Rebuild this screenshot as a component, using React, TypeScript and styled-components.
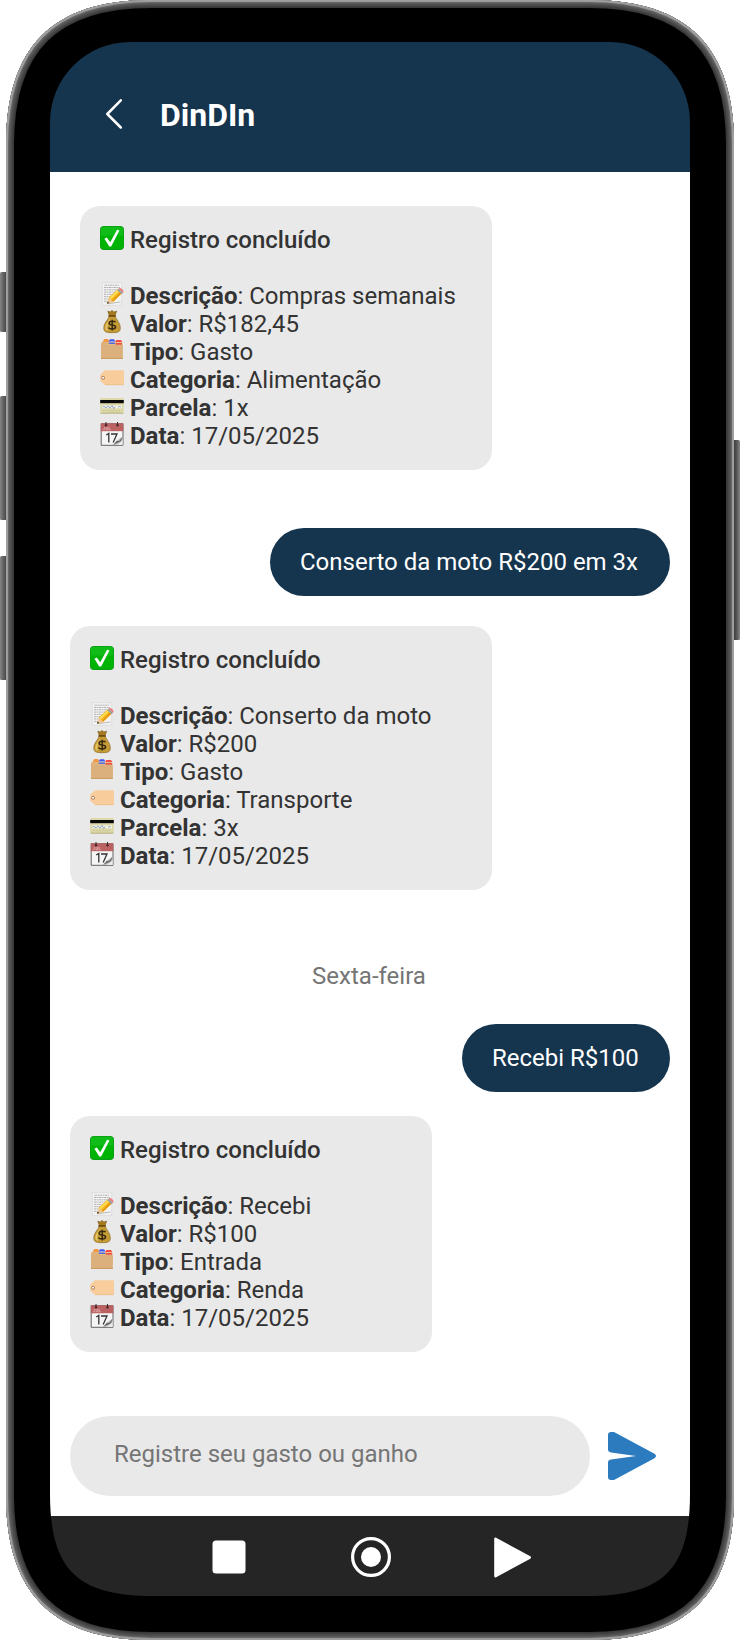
import React from "react";
import styled, { createGlobalStyle } from "styled-components";

const GlobalStyle = createGlobalStyle`
  * { box-sizing: border-box; }
  body {
    margin: 0;
    background: #fff;
    font-family: Roboto, "Liberation Sans", sans-serif;
  }
`;

const Device = styled.div`
  position: relative;
  width: 740px;
  height: 1640px;
  padding: 42px 50px 44px;
  overflow: hidden;
`;

const Shell = styled.svg`
  position: absolute;
  inset: 0;
  display: block;
`;

const Screen = styled.main`
  position: relative;
  display: flex;
  flex-direction: column;
  width: 640px;
  height: 1554px;
  clip-path: path("M80 0H560A80 80 0 0 1 640 80V1452C640 1527 613 1554 538 1554H102C27 1554 0 1527 0 1452V80A80 80 0 0 1 80 0Z");
`;

const Header = styled.header`
  display: flex;
  align-items: center;
  height: 130px;
  padding: 14px 56px 0;
  background: #15344d;
  color: #fff;
`;

const BackButton = styled.button`
  display: flex;
  width: 16px;
  height: 30px;
  margin: 0 38px 0 0;
  padding: 0;
  border: 0;
  background: none;
  color: inherit;
`;

const Title = styled.h1`
  margin: 0;
  padding-top: 2px;
  font-size: 32px;
  line-height: 38px;
  font-weight: 700;
`;

const Chat = styled.section`
  flex: 1;
  display: flex;
  flex-direction: column;
  padding: 34px 20px 0;
  background: #fff;
`;

const Receipt = styled.article<{ $width: number; $indent?: number; $gap: number }>`
  width: ${(p) => p.$width}px;
  margin: 0 0 ${(p) => p.$gap}px ${(p) => p.$indent ?? 0}px;
  padding: 20px;
  border-radius: 20px;
  background: #e9e9e9;
  color: #333;
  font-size: 24px;
  line-height: 28px;
`;

const ReceiptTitle = styled.h2`
  display: flex;
  align-items: center;
  gap: 6px;
  margin: 0 0 28px;
  font-size: inherit;
  line-height: inherit;
  font-weight: 500;
`;

const Line = styled.p`
  display: flex;
  align-items: center;
  gap: 6px;
  height: 28px;
  margin: 0;
  white-space: nowrap;

  b { font-weight: 700; }
`;

const Emoji = styled.svg`
  flex: none;
  display: block;
  width: 24px;
  height: 24px;
  margin-top: -4px;
`;

const Sent = styled.p<{ $width: number; $gap: number }>`
  align-self: flex-end;
  width: ${(p) => p.$width}px;
  margin: 0 0 ${(p) => p.$gap}px;
  padding: 20px 0 20px 30px;
  border-radius: 34px;
  background: #15344d;
  color: #fff;
  font-size: 24px;
  line-height: 28px;
  white-space: nowrap;
`;

const DayLabel = styled.div`
  margin: 0 0 34px;
  padding-right: 2px;
  color: #757575;
  font-size: 24px;
  line-height: 28px;
  text-align: center;
`;

const Composer = styled.form`
  display: flex;
  align-items: center;
  gap: 18px;
  padding: 0 20px 20px;
  background: #fff;
`;

const Entry = styled.div`
  width: 520px;
  height: 80px;
  padding: 24px 44px;
  border-radius: 40px;
  background: #e9e9e9;
  color: #757575;
  font-size: 24px;
  line-height: 28px;
`;

const SendButton = styled.button`
  display: flex;
  padding: 0;
  border: 0;
  background: none;
`;

const NavBar = styled.nav`
  display: flex;
  align-items: center;
  height: 80px;
  padding: 2px 0 0 162px;
  background: #252525;
`;

const NavIcon = styled.svg<{ $after?: number }>`
  display: block;
  margin-right: ${(p) => p.$after ?? 0}px;
`;

type EmojiName = "check" | "memo" | "money" | "folder" | "tag" | "card" | "calendar";

const drawings: Record<EmojiName, React.ReactNode> = {
  check: (
    <>
      <rect x="0" y="0" width="24" height="24" rx="4" fill="#0a9c12" />
      <rect x=".8" y=".8" width="22.4" height="21.8" rx="3.2" fill="#10bc18" />
      <path d="M.8 9.5H23.2V19.6Q23.2 22.8 20 22.8H4Q.8 22.8 .8 19.6Z" fill="#00b406" />
      <path d="M4.4 12.8L6.8 11.6L10.2 16.2L17.1 3.7L19.4 4.5L11.2 20.4H9.3Z" fill="#fff" />
    </>
  ),
  memo: (
    <>
      <path d="M2.3 .7H21.7V23.3H2.3Z" fill="#f3f3f3" stroke="#d4d4d4" strokeWidth=".6" />
      <path d="M4.5 3.2H19M4 5.5H20M4 7.8H17M4 10.1H15M4 12.4H13M4 14.7H10M4 17H8M4 19.3H7" stroke="#aaa" strokeWidth=".9" strokeDasharray="2.5 .6 1.4 .5" />
      <path d="M8 21.7L20.5 20" stroke="#bbb" />
      <path d="M7 21.7L9 15.5L18 7L22.3 11.2L13.2 20Z" fill="#f7b719" />
      <path d="M10.2 16.7L19 8.2" stroke="#ffe05d" strokeWidth="1.7" />
      <path d="M12.5 19.1L21.3 10.4" stroke="#dc8b12" strokeWidth="1.1" />
      <path d="M7 21.7L9 15.5L13.2 20Z" fill="#efc79a" />
      <path d="M7 21.7L7.7 19.3L9.1 21Z" fill="#292929" />
      <path d="M17 8L18.7 6.5L23 10.7L21.4 12.2Z" fill="#9da1a2" />
      <path d="M18.7 6.5Q20 5.3 22 7.1Q24.4 9.2 23 10.7Z" fill="#ee7777" />
    </>
  ),
  money: (
    <>
      <path d="M7.8 1.2L10.4 2L12 .3L13.7 2L16.6 1.2L15 5.8H9.4Z" fill="#a77a20" stroke="#795512" strokeWidth=".6" />
      <path d="M9 6H15.3C16 10 20.3 12 20.3 18.2C20.3 21.8 18.1 22.7 12.1 22.7S3.8 21.8 3.8 18.2C3.8 12 8.5 10 9 6Z" fill="#c59b35" stroke="#815e1a" strokeWidth=".6" />
      <path d="M9.5 8C9.3 11.5 5.3 13.5 5.3 18C5.3 20.5 7 20.8 8 20.8C5.5 15 10.5 12 9.5 8Z" fill="#e6c769" />
      <path d="M8.5 5.9H15.7" stroke="#6d4811" strokeWidth="1.6" />
      <path d="M15.5 12.2C14.7 10.9 9.1 10.7 9.1 13.2C9.1 16 15.6 14 15.6 17C15.6 19.5 9.3 19.3 8.6 17.4M12.2 9.7V20.5" fill="none" stroke="#382b11" strokeWidth="1.5" />
    </>
  ),
  folder: (
    <>
      <path d="M2.5 4L4.2 1H8L9.5 4Z" fill="#f39745" />
      <path d="M8.5 3.5L10 1.3H14L15.5 3.5Z" fill="#4258ee" />
      <path d="M15 4L16.4 2.1H21L22.2 4Z" fill="#f54c43" />
      <path d="M3.5 4H22.4V7H3.5Z" fill="#e5c194" />
      <path d="M8.5 4.5H15V6H8.5Z" fill="#536de0" />
      <path d="M15.5 5H22V7H15.5Z" fill="#f24c43" />
      <path d="M1 5L3.2 3.6L8 4.5L9.5 6.7H22.7V21H1Z" fill="#dfb27a" />
      <path d="M1 6.8H22.7V21H1Z" fill="#dbb07c" />
      <path d="M1 20.4H22.7" stroke="#c89657" strokeWidth=".8" />
    </>
  ),
  tag: (
    <>
      <path d="M5 4.3H23Q24 4.3 24 5.3V18Q24 19 23 19H5L.8 15.3Q.2 14.8.2 14V9.4Q.2 8.7.8 8Z" fill="#f8cd9b" />
      <path d="M5 18.7H23.5" stroke="#e8b77f" strokeWidth=".7" />
      <circle cx="3.1" cy="11.8" r="1.5" fill="#fff" stroke="#a77555" strokeWidth=".9" />
    </>
  ),
  card: (
    <>
      <rect x=".2" y="4" width="23.6" height="15.7" rx="1.2" fill="#ddd8a8" />
      <path d="M.2 6H23.8V9.2H.2Z" fill="#080808" />
      <path d="M2 11.3H22V14.3H2Z" fill="#f4f3e7" />
      <path d="M2.5 13.2Q4 11.3 5 13.1T7 12.8T9 13.1T11 12.7T13 13.1T15 12.7M18 13.1Q19.7 11.8 21 13.1" fill="none" stroke="#6482b4" strokeWidth=".7" />
      <path d="M3 16.3H20M7 18H20" stroke="#c5c090" strokeWidth=".6" strokeDasharray="2 1" />
      <path d="M.7 19.2H23.2" stroke="#aaa57b" strokeWidth=".7" />
    </>
  ),
  calendar: (
    <>
      <path d="M1.2 1.7H23V23.3H1.2Z" fill="#f5f5f5" stroke="#555" strokeWidth=".9" />
      <path d="M.8 1.3H23.3V9.2H.8Z" fill="#bd6263" />
      <path d="M2.9 7.7H4.3V4.8M6.1 4.8V7.7H7.8V4.8M9.1 4.8V7.7H10.8" fill="none" stroke="#e5bdbd" strokeWidth=".7" />
      <path d="M6 0V4M17.5 0V4" stroke="#333" strokeWidth="1" />
      <circle cx="6" cy="3.3" r="1.2" fill="#4a2525" />
      <circle cx="17.5" cy="3.3" r="1.2" fill="#4a2525" />
      <path d="M6.2 13L8.8 11.5V20.5M11 12H17L13.2 20.5" fill="none" stroke="#333" strokeWidth="1.3" />
      <path d="M13.2 23L17 18.8L22.6 14.2V23Z" fill="#bbb" />
      <path d="M13.2 22.8L16.9 18.8L19.2 19L22.6 14.7L21 19.3Z" fill="#666" />
      <path d="M15.5 22.8Q20.5 21.5 22.6 17.5V22.9Z" fill="#ececec" />
    </>
  ),
};

const Glyph = ({ name }: { name: EmojiName }) => (
  <Emoji viewBox="0 0 24 24" aria-hidden="true">
    {drawings[name]}
  </Emoji>
);

type Row = [EmojiName, string, string];

const Registered = ({ rows, ...box }: { rows: Row[]; $width: number; $indent?: number; $gap: number }) => (
  <Receipt {...box}>
    <ReceiptTitle>
      <Glyph name="check" />
      Registro concluído
    </ReceiptTitle>
    {rows.map(([icon, label, value]) => (
      <Line key={label}>
        <Glyph name={icon} />
        <span>
          <b>{label}</b>: {value}
        </span>
      </Line>
    ))}
  </Receipt>
);

const bodyPath =
  "M151 0H589C687.1 0 734 46.9 734 145V1495C734 1593.1 687.1 1640 589 1640H151C52.9 1640 6 1593.1 6 1495V145C6 46.9 52.9 0 151 0Z";

const rim: [number, string][] = [
  [16, "#393939"],
  [14, "#3f3f3f"],
  [12, "#484848"],
  [10, "#505050"],
  [8, "#595959"],
  [6, "#666"],
  [4, "#9c9c9c"],
  [2, "#a0a0a0"],
];

const DeviceShell = () => (
  <Shell width="740" height="1640" viewBox="0 0 740 1640" aria-hidden="true">
    <defs>
      <clipPath id="body">
        <path d={bodyPath} />
      </clipPath>
      <linearGradient id="leftKey">
        <stop offset="0" stopColor="#858585" />
        <stop offset=".5" stopColor="#5b5b5b" />
        <stop offset="1" stopColor="#3b3b3b" />
      </linearGradient>
      <linearGradient id="rightKey">
        <stop offset="0" stopColor="#393939" />
        <stop offset=".5" stopColor="#4c4c4c" />
        <stop offset="1" stopColor="#858585" />
      </linearGradient>
    </defs>
    <rect x="0" y="272" width="8" height="60" rx="1.5" fill="url(#leftKey)" />
    <rect x="0" y="396" width="8" height="124" rx="1.5" fill="url(#leftKey)" />
    <rect x="0" y="556" width="8" height="124" rx="1.5" fill="url(#leftKey)" />
    <rect x="732" y="440" width="8" height="200" rx="1.5" fill="url(#rightKey)" />
    <g clipPath="url(#body)">
      <path d={bodyPath} fill="#000" />
      {rim.map(([width, color]) => (
        <path key={width} d={bodyPath} fill="none" stroke={color} strokeWidth={width} />
      ))}
    </g>
  </Shell>
);

export default function App() {
  return (
    <>
      <GlobalStyle />
      <Device>
        <DeviceShell />
        <Screen>
          <Header>
            <BackButton aria-label="Voltar">
              <svg width="16" height="30" viewBox="0 0 16 30">
                <path d="M14.8 1.3L1.3 15L14.8 28.5" fill="none" stroke="#fff" strokeWidth="2.5" strokeLinecap="round" strokeLinejoin="round" />
              </svg>
            </BackButton>
            <Title>DinDIn</Title>
          </Header>

          <Chat>
            <Registered
              $width={412}
              $indent={10}
              $gap={58}
              rows={[
                ["memo", "Descrição", "Compras semanais"],
                ["money", "Valor", "R$182,45"],
                ["folder", "Tipo", "Gasto"],
                ["tag", "Categoria", "Alimentação"],
                ["card", "Parcela", "1x"],
                ["calendar", "Data", "17/05/2025"],
              ]}
            />
            <Sent $width={400} $gap={30}>Conserto da moto R$200 em 3x</Sent>
            <Registered
              $width={422}
              $gap={72}
              rows={[
                ["memo", "Descrição", "Conserto da moto"],
                ["money", "Valor", "R$200"],
                ["folder", "Tipo", "Gasto"],
                ["tag", "Categoria", "Transporte"],
                ["card", "Parcela", "3x"],
                ["calendar", "Data", "17/05/2025"],
              ]}
            />
            <DayLabel>Sexta-feira</DayLabel>
            <Sent $width={208} $gap={24}>Recebi R$100</Sent>
            <Registered
              $width={362}
              $gap={0}
              rows={[
                ["memo", "Descrição", "Recebi"],
                ["money", "Valor", "R$100"],
                ["folder", "Tipo", "Entrada"],
                ["tag", "Categoria", "Renda"],
                ["calendar", "Data", "17/05/2025"],
              ]}
            />
          </Chat>

          <Composer>
            <Entry>Registre seu gasto ou ganho</Entry>
            <SendButton type="button" aria-label="Enviar">
              <svg width="48" height="48" viewBox="0 0 48 48">
                <path d="M0 3Q0 0 3 0H6L46.5 21.8Q49.5 24 46.5 26.2L6 48H3Q0 48 0 45V30.5Q0 28 3 27.6L28 24L3 20.4Q0 20 0 17.5Z" fill="#2d7bbf" />
              </svg>
            </SendButton>
          </Composer>

          <NavBar>
            <NavIcon width="34" height="34" viewBox="0 0 34 34" $after={105}>
              <rect x=".5" y=".5" width="33" height="33" rx="3.5" fill="#fff" />
            </NavIcon>
            <NavIcon width="40" height="40" viewBox="0 0 40 40" $after={103}>
              <circle cx="20" cy="20" r="18.4" fill="none" stroke="#fff" strokeWidth="3.2" />
              <circle cx="20" cy="20" r="10" fill="#fff" />
            </NavIcon>
            <NavIcon width="38" height="41" viewBox="0 0 38 41">
              <path d="M1.5 1.8L35.7 20.5L1.5 39.2Z" fill="#fff" stroke="#fff" strokeWidth="2.6" strokeLinejoin="round" />
            </NavIcon>
          </NavBar>
        </Screen>
      </Device>
    </>
  );
}
